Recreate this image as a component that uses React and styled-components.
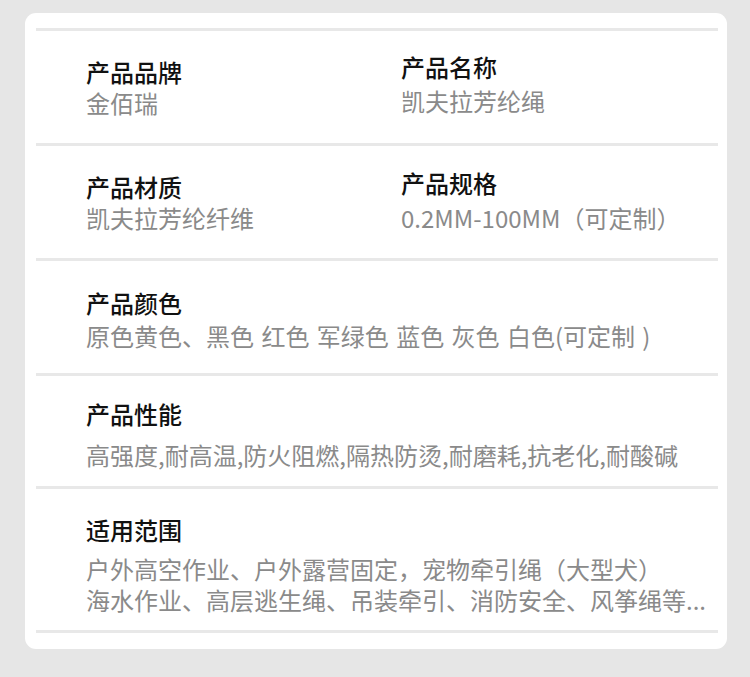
import React from 'react'
import styled, { createGlobalStyle } from 'styled-components'

const GlobalStyle = createGlobalStyle`
  html, body {
    margin: 0;
    padding: 0;
    background: #e6e6e6;
  }
  body {
    font-family: "Noto Sans CJK SC", "Noto Sans", sans-serif;
  }
`

const rows = [
  {
    h: 112,
    cells: [
      { label: '产品品牌', lines: ['金佰瑞'], top: 25, gap: 0 },
      { label: '产品名称', lines: ['凯夫拉芳纶绳'], top: 20, gap: 3 },
    ],
  },
  {
    h: 112,
    cells: [
      { label: '产品材质', lines: ['凯夫拉芳纶纤维'], top: 25, gap: 0 },
      { label: '产品规格', lines: ['0.2MM-100MM（可定制）'], top: 21, gap: 4 },
    ],
  },
  {
    h: 112,
    cells: [
      { label: '产品颜色', lines: ['原色黄色、黑色 红色 军绿色 蓝色 灰色 白色(可定制 )'], top: 26, gap: 2, wide: true },
    ],
  },
  {
    h: 110,
    cells: [
      { label: '产品性能', lines: ['高强度,耐高温,防火阻燃,隔热防烫,耐磨耗,抗老化,耐酸碱'], top: 22, gap: 10, wide: true },
    ],
  },
  {
    h: 141,
    cells: [
      {
        label: '适用范围',
        lines: ['户外高空作业、户外露营固定，宠物牵引绳（大型犬）', '海水作业、高层逃生绳、吊装牵引、消防安全、风筝绳等...'],
        top: 25,
        gap: 8,
        wide: true,
      },
    ],
  },
]

const App = () => {
  return (
    <>
      <GlobalStyle />
      <Card>
        {rows.map((row, i) => (
          <Row key={i} $h={row.h} $last={i === rows.length - 1}>
            {row.cells.map((cell) => (
              <Cell key={cell.label} $top={cell.top} $wide={cell.wide}>
                <Label>{cell.label}</Label>
                <Values $gap={cell.gap}>
                  {cell.lines.map((line) => (
                    <Value key={line}>{line}</Value>
                  ))}
                </Values>
              </Cell>
            ))}
          </Row>
        ))}
      </Card>
    </>
  )
}

const Card = styled.div`
  width: 702px;
  box-sizing: border-box;
  margin: 13px 0 0 25px;
  padding: 15px 9px 16px 11px;
  background: #ffffff;
  border-radius: 11px;
`

const Row = styled.div`
  display: grid;
  grid-template-columns: 315px 1fr;
  align-items: start;
  height: ${(p) => p.$h}px;
  padding-left: 50px;
  border-top: 3px solid #e8e8e8;
  border-bottom: ${(p) => (p.$last ? '3px solid #e8e8e8' : 'none')};
`

const Cell = styled.div`
  grid-column: ${(p) => (p.$wide ? '1 / -1' : 'auto')};
  padding-top: ${(p) => p.$top}px;
  white-space: nowrap;
`

const Label = styled.div`
  font-size: 24px;
  line-height: 31px;
  font-weight: 500;
  color: #111111;
`

const Values = styled.div`
  margin-top: ${(p) => p.$gap}px;
`

const Value = styled.div`
  font-size: 24px;
  line-height: 31px;
  word-spacing: 2px;
  color: #8a8a8a;
`

export default App
